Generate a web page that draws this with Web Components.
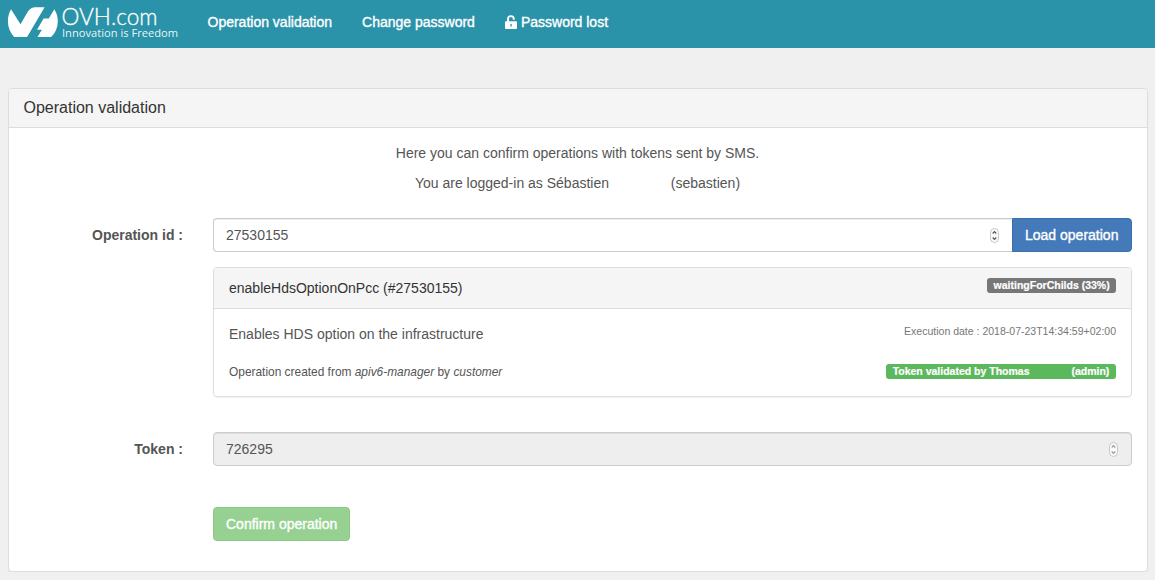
<!DOCTYPE html>
<html lang="en">
<head>
<meta charset="utf-8">
<title>Operation validation</title>
<style>
  body { margin: 0; background: #f0f0f0; color: #555; font: 14px/20px "Liberation Sans", Arial, sans-serif; }
  .gap { display: inline-block; width: 54px; }
  .gap.small { width: 36px; }
</style>
</head>
<body>
<site-header>
  <nav-link>Operation validation</nav-link>
  <nav-link>Change password</nav-link>
  <nav-link unlock>Password lost</nav-link>
</site-header>
<main-panel>
  <span slot="title">Operation validation</span>
  <intro-text>Here you can confirm operations with tokens sent by SMS.</intro-text>
  <intro-text>You are logged-in as Sébastien <span class="gap"></span> (sebastien)</intro-text>
  <form-row style="--top:25px">
    <span slot="label">Operation id :</span>
    <number-field joined>27530155</number-field>
    <action-button kind="primary">Load operation</action-button>
  </form-row>
  <form-row style="--top:15px">
    <operation-card>
      <span slot="name">enableHdsOptionOnPcc (#27530155)</span>
      <status-label slot="status">waitingForChilds (33%)</status-label>
      <span slot="description">Enables HDS option on the infrastructure</span>
      <span slot="date">Execution date : 2018-07-23T14:34:59+02:00</span>
      <span slot="origin">Operation created from <i>apiv6-manager</i> by <i>customer</i></span>
      <status-label slot="validation" success>Token validated by Thomas <span class="gap small"></span> (admin)</status-label>
    </operation-card>
  </form-row>
  <form-row style="--top:35px">
    <span slot="label">Token :</span>
    <number-field disabled>726295</number-field>
  </form-row>
  <form-row style="--top:41px">
    <action-button kind="success">Confirm operation</action-button>
  </form-row>
</main-panel>
<script>
  const define = (name, html) => {
    const template = document.createElement('template');
    template.innerHTML = html;
    customElements.define(name, class extends HTMLElement {
      constructor() {
        super();
        this.attachShadow({ mode: 'open' }).append(template.content.cloneNode(true));
      }
    });
  };

  define('brand-logo', `
    <style>
      :host { display: block; width: 184px; height: 48px; }
      svg { display: block; }
      text { fill: #fff; font-family: Lato, sans-serif; font-weight: 300; font-variant-ligatures: none; }
      .name { stroke: #fff; stroke-width: .3px; }
      .tagline { font-family: "Open Sans", sans-serif; font-weight: 400; fill-opacity: .92; }
    </style>
    <svg width="184" height="48" viewBox="0 0 184 48">
      <path fill="#fff" d="M11 9.2 20.5 24.2 27.3 12.5Q30.2 7.4 34.5 7.2H44.6L27.1 37H14.2Q8.1 30.5 7.9 21.5 7.8 14.8 11 9.2Z"/>
      <path fill="#fff" d="M54.3 9.2Q57.8 14.5 57.8 21.5 57.6 31 51.1 37H37.5L41.9 29.7H37L43.6 18.5H48.8Z"/>
      <text class="name" x="61.500" y="25" font-size="23" textLength="96" lengthAdjust="spacingAndGlyphs">OVH.com</text>
      <text class="tagline" x="62" y="36.500" font-size="10.600" textLength="116" lengthAdjust="spacingAndGlyphs">Innovation is Freedom</text>
    </svg>`);

  define('site-header', `
    <style>
      :host { display: flex; height: 48px; background: #2a93a9; }
      nav { display: flex; gap: 30px; padding: 12px 0 0 23.5px; }
    </style>
    <brand-logo></brand-logo>
    <nav><slot></slot></nav>`);

  define('nav-link', `
    <style>
      :host { display: flex; gap: 4px; height: 20px; color: #fff; white-space: nowrap; -webkit-text-stroke: .35px #fff; }
      svg { display: none; margin-top: 3px; }
      :host([unlock]) svg { display: block; }
    </style>
    <svg width="12" height="14" viewBox="0 0 12 14">
      <path d="M3 7V4a2.900 2.900 0 0 1 5.800 0v.8" fill="none" stroke="#fff" stroke-width="1.900"/>
      <path fill="#fff" fill-rule="evenodd" d="M1 6.200h10q1 0 1 1V13q0 1-1 1H1q-1 0-1-1V7.200q0-1 1-1ZM5.400 9v2.400h1.300V9Z"/>
    </svg>
    <span><slot></slot></span>`);

  define('main-panel', `
    <style>
      :host { display: block; box-sizing: border-box; width: 1140px; height: 484px; margin: 40px 0 0 8px; background: #fff; border: 1px solid #ddd; border-radius: 4px; box-shadow: 0 1px 1px rgba(0,0,0,.05); }
      header { height: 38px; padding: 0 14.500px; border-bottom: 1px solid #ddd; border-radius: 3px 3px 0 0; background: #f5f5f5; color: #333; font-size: 16px; line-height: 37px; }
      section { padding: 15px; }
    </style>
    <header><slot name="title"></slot></header>
    <section><slot></slot></section>`);

  define('intro-text', `
    <style>:host { display: block; margin-bottom: 10px; padding-right: 1px; text-align: center; }</style>
    <slot></slot>`);

  define('form-row', `
    <style>
      :host { display: grid; grid-template-columns: 159px 1fr; column-gap: 30px; margin-top: var(--top); }
      .label { text-align: right; font-weight: bold; line-height: 34px; }
      .content { display: flex; }
    </style>
    <div class="label"><slot name="label"></slot></div>
    <div class="content"><slot></slot></div>`);

  define('number-field', `
    <style>
      :host { display: flex; flex: 1; align-items: center; justify-content: space-between; box-sizing: border-box; height: 34px; padding: 0 13px 0 12px; border: 1px solid #ccc; border-radius: 4px; background: #fff; box-shadow: inset 0 1px 1px rgba(0,0,0,.075); }
      :host([joined]) { border-right: 0; border-radius: 4px 0 0 4px; }
      :host([disabled]) { background: #eee; }
      :host([disabled]) path { stroke: #999; }
    </style>
    <span><slot></slot></span>
    <svg width="9" height="15" viewBox="0 0 9 15">
      <rect x=".5" y=".5" width="8" height="14" rx="4" fill="#fafafa" stroke="#c8c8c8"/>
      <path d="M2.700 5.500 4.500 3.700 6.300 5.500M2.700 9.500 4.500 11.300 6.300 9.500" fill="none" stroke="#555" stroke-width="1.200"/>
    </svg>`);

  define('action-button', `
    <style>
      :host { display: block; box-sizing: border-box; height: 34px; padding: 6px 12px; border: 1px solid; border-radius: 4px; white-space: nowrap; -webkit-text-stroke: .35px #fff; }
      :host([kind=primary]) { width: 120px; background: #4479ba; border-color: #376eab; border-radius: 0 4px 4px 0; }
      :host([kind=success]) { background: #96d192; border-color: #8aca86; }
      span { color: #fff; }
    </style>
    <span><slot></slot></span>`);

  define('status-label', `
    <style>
      :host { display: block; height: 15px; padding: 0 6.300px; border-radius: 3px; background: #777; color: #fff; font-size: 10.500px; font-weight: bold; line-height: 14px; white-space: nowrap; -webkit-text-stroke: .2px #fff; }
      :host([success]) { padding: 0 6.700px; background: #5cb85c; }
    </style>
    <slot></slot>`);

  define('operation-card', `
    <style>
      :host { display: block; flex: 1; box-sizing: border-box; height: 130px; border: 1px solid #ddd; border-radius: 4px; box-shadow: 0 1px 1px rgba(0,0,0,.05); }
      header, .row { display: flex; justify-content: space-between; align-items: flex-start; padding: 0 15px; }
      header { height: 30px; padding-top: 10px; border-bottom: 1px solid #ddd; border-radius: 3px 3px 0 0; background: #f5f5f5; color: #333; }
      .first { padding-top: 15px; }
      .second { padding-top: 20px; font-size: 11.920px; line-height: 17px; }
      .date { color: #777; font-size: 10.520px; line-height: 15px; }
    </style>
    <header><slot name="name"></slot><slot name="status"></slot></header>
    <div class="row first"><slot name="description"></slot><span class="date"><slot name="date"></slot></span></div>
    <div class="row second"><slot name="origin"></slot><slot name="validation"></slot></div>`);
</script>
</body>
</html>
